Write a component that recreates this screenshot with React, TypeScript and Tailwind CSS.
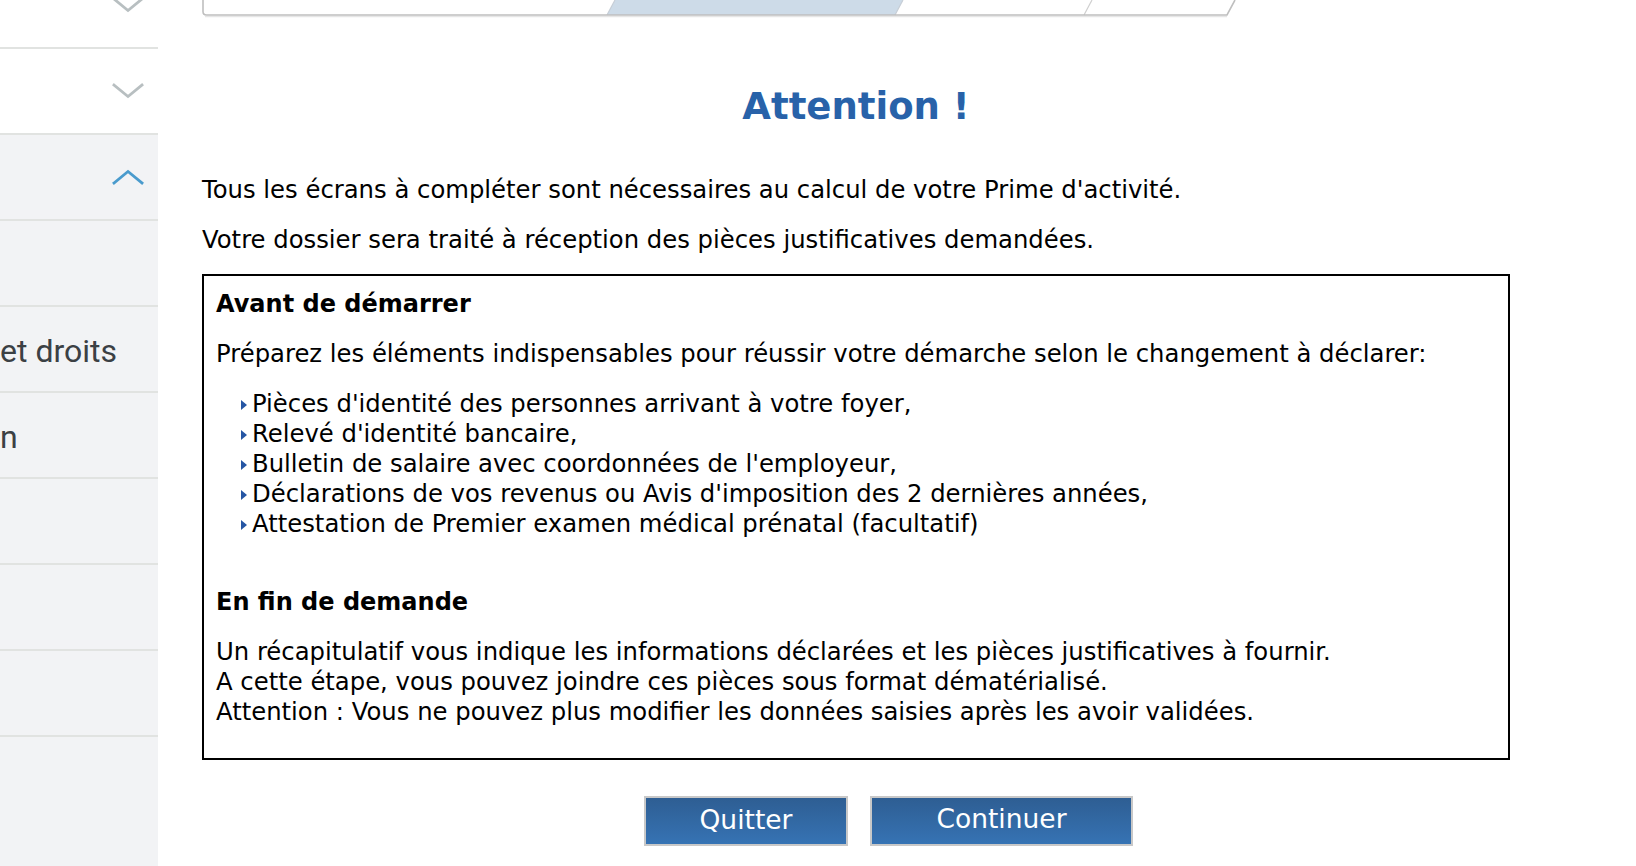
import React from 'react'

const ROWS: { label?: string; open?: boolean; white?: boolean }[] = [
  { white: true },
  { white: true },
  { open: true },
  {},
  { label: 'et droits' },
  { label: 'n' },
  {},
  {},
  {},
]

const CHECKLIST = [
  "Pièces d'identité des personnes arrivant à votre foyer,",
  "Relevé d'identité bancaire,",
  "Bulletin de salaire avec coordonnées de l'employeur,",
  "Déclarations de vos revenus ou Avis d'imposition des 2 dernières années,",
  'Attestation de Premier examen médical prénatal (facultatif)',
]

function Chevron({ up }: { up?: boolean }) {
  return (
    <svg width="32" height="16" viewBox="0 0 32 16" fill="none">
      <polyline
        points={up ? '2,14 16,2.5 30,14' : '2,2 16,13.5 30,2'}
        stroke={up ? '#4a9bcd' : '#b8bfc1'}
        strokeWidth="2.8"
        strokeLinecap="square"
      />
    </svg>
  )
}

function Sidebar() {
  return (
    <aside className="w-[158px] shrink-0 h-full bg-[#f2f3f5] overflow-hidden font-['Roboto',sans-serif]">
      <div className="-mt-[37px]">
        {ROWS.map((r, i) => (
          <div
            key={i}
            className={`h-[86px] border-b-2 border-[#e1e3e1] flex items-center ${r.white ? 'bg-white' : ''}`}
          >
            {r.label && (
              <span className="mt-[4px] text-[32px] leading-none text-[#3b4044] whitespace-nowrap">{r.label}</span>
            )}
            {i < 3 && (
              <div className="ml-auto mr-[14px] flex">
                <Chevron up={r.open} />
              </div>
            )}
          </div>
        ))}
      </div>
    </aside>
  )
}

// partially scrolled-off step strip at the top
function StepStrip() {
  return (
    <svg width="1040" height="18" viewBox="0 0 1040 18" className="block">
      <polygon points="405,15 413,0 701,0 693,15" fill="#cddbe8" />
      <line x1="405" y1="15" x2="413" y2="0" stroke="#c7ced6" strokeWidth="1.2" />
      <line x1="693" y1="15" x2="701" y2="0" stroke="#c7ced6" strokeWidth="1.2" />
      <line x1="882" y1="15" x2="890" y2="0" stroke="#cfcfcf" strokeWidth="1.2" />
      <path d="M1,0 V11.5 Q1,15 4.5,15 H1025 L1033,0" fill="none" stroke="#bfbfbf" strokeWidth="1.6" />
      <path d="M3,16.6 H1025" stroke="#e6e6e6" strokeWidth="1.2" />
    </svg>
  )
}

function Bullet() {
  return (
    <span className="mt-[11px] mr-[5px] w-0 h-0 border-y-[5px] border-y-transparent border-l-[6px] border-l-[#2656a4] shrink-0" />
  )
}

export default function App() {
  return (
    <div className="w-[1636px] h-[866px] flex overflow-hidden bg-white font-['DejaVu_Sans',Verdana,sans-serif] text-black">
      <Sidebar />
      <main className="ml-[44px] w-[1308px] flex flex-col">
        <StepStrip />

        <h1 className="mt-[67px] text-center text-[37px] leading-[44px] font-bold text-[#2862a9]">
          Attention !
        </h1>

        <p className="mt-[46px] text-[24.3px] leading-[30px]">
          Tous les écrans à compléter sont nécessaires au calcul de votre Prime d'activité.
        </p>
        <p className="mt-[20px] text-[24.3px] leading-[30px]">
          Votre dossier sera traité à réception des pièces justificatives demandées.
        </p>

        <section className="mt-[19px] border-2 border-black pl-[12px] pr-[12px] pt-[13px] pb-[30px] text-[24.3px] leading-[30px]">
          <h3 className="font-bold text-[24px]">Avant de démarrer</h3>
          <p className="mt-[20px]">
            Préparez les éléments indispensables pour réussir votre démarche selon le changement à déclarer:
          </p>
          <ul className="mt-[20px]">
            {CHECKLIST.map(item => (
              <li key={item} className="flex items-start pl-[25px]">
                <Bullet />
                <span>{item}</span>
              </li>
            ))}
          </ul>

          <h3 className="mt-[48px] font-bold text-[24px]">En fin de demande</h3>
          <p className="mt-[20px] leading-[30.2px]">
            Un récapitulatif vous indique les informations déclarées et les pièces justificatives à fournir.
            <br />
            A cette étape, vous pouvez joindre ces pièces sous format dématérialisé.
            <br />
            Attention : Vous ne pouvez plus modifier les données saisies après les avoir validées.
          </p>
        </section>

        <div className="mt-[36px] ml-[442px] flex gap-[22px]">
          <button className="w-[204px] h-[50px] pb-[1px] border-2 border-[#c8c8c8] bg-linear-to-b from-[#2e5e93] to-[#3673b4] text-white text-[26.5px] leading-none">
            Quitter
          </button>
          <button className="w-[263px] h-[50px] pb-[3px] border-2 border-[#c8c8c8] bg-linear-to-b from-[#2e5e93] to-[#3673b4] text-white text-[26.5px] leading-none">
            Continuer
          </button>
        </div>
      </main>
    </div>
  )
}
